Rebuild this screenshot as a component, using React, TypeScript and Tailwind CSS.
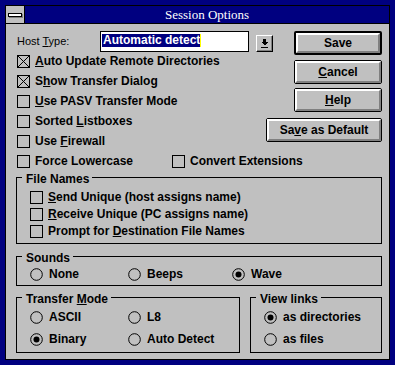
import React from "react";

const Check: React.FC<{ checked?: boolean }> = ({ checked }) => (
  <svg width="13" height="13" className="shrink-0" shapeRendering="crispEdges">
    <rect x="0.5" y="0.5" width="12" height="12" fill="none" stroke="black" />
    {checked && <path d="M1 1L12 12M12 1L1 12" stroke="black" />}
  </svg>
);

const Radio: React.FC<{ on?: boolean }> = ({ on }) => (
  <svg width="13" height="13" className="shrink-0">
    <circle cx="6.5" cy="6.5" r="5.8" fill="none" stroke="black" />
    {on && <circle cx="6.5" cy="6.5" r="3" fill="black" />}
  </svg>
);

const CheckRow: React.FC<{ checked?: boolean; h: string; children: React.ReactNode }> = ({ checked, h, children }) => (
  <div className={`flex items-start gap-[5px] whitespace-nowrap ${h}`}>
    <Check checked={checked} />
    <span className="leading-[13px]">{children}</span>
  </div>
);

const RadioItem: React.FC<{ on?: boolean; w?: string; children: React.ReactNode }> = ({ on, w = "", children }) => (
  <div className={`flex items-start gap-[6px] whitespace-nowrap ${w}`}>
    <Radio on={on} />
    <span className="leading-[13px]">{children}</span>
  </div>
);

const Btn: React.FC<{ def?: boolean; w: string; children: React.ReactNode }> = ({ def, w, children }) => (
  <div className={`flex h-[24px] rounded-[2px] border-black ${def ? "border-2" : "border"} ${w}`}>
    <div className="flex flex-1 items-center justify-center border-2 border-t-white border-l-white border-r-[#808080] border-b-[#808080] leading-none">
      {children}
    </div>
  </div>
);

const GroupLabel: React.FC<{ children: React.ReactNode }> = ({ children }) => (
  <span className="-mt-[5px] ml-[5px] self-start bg-[#c0c0c0] pl-[4px] pr-[3px] leading-[13px] whitespace-nowrap">
    {children}
  </span>
);

export default function App() {
  return (
    <div className="h-[365px] w-[395px] bg-[#000080] p-[5px] font-['Liberation_Sans',Arial,sans-serif] text-[12px] font-bold text-black">
      <div className="flex h-full flex-col border border-black bg-[#c0c0c0]">
        {/* title bar */}
        <div className="flex h-[18px] shrink-0 border-b border-black">
          <div className="flex w-[19px] items-center justify-center border-r border-black bg-[#c0c0c0]">
            <div className="h-[4px] w-[14px] border border-black bg-white shadow-[1px_1px_0_#808080]" />
          </div>
          <div className="flex flex-1 items-center justify-center bg-[#000080] font-['Liberation_Serif','Times_New_Roman',serif] text-[13px] font-normal text-white">
            Session Options
          </div>
        </div>

        <div className="flex flex-col pl-[10px] pr-[7px] pt-[7px]">
          <div className="flex pl-[1px]">
            <div className="flex min-w-0 flex-1 flex-col">
              <div className="flex h-[24px] items-start whitespace-nowrap">
                <span className="w-[83px] shrink-0 pt-[4px] text-[11px] font-normal leading-[13px]">
                  Host <u>T</u>ype:
                </span>
                <div className="flex h-[21px] w-[149px] shrink-0 items-start border border-black bg-white pl-[1px] pt-[2px]">
                  <span className="h-[13px] bg-[#000080] pl-[1px] leading-[13px] text-white">Automatic detect</span>
                  <span className="h-[13px] w-[1px] bg-[#ffff00]" />
                </div>
                <div className="ml-[7px] mt-[4px] flex h-[17px] w-[17px] shrink-0 items-center justify-center border border-t-white border-l-white border-r-black border-b-black bg-[#c0c0c0] shadow-[inset_-1px_-1px_0_#808080]">
                  <svg width="7" height="9" shapeRendering="crispEdges">
                    <rect x="2" y="0" width="3" height="3" fill="black" />
                    <path d="M0 3H7L3.5 6.5Z" fill="black" />
                    <rect x="0" y="8" width="7" height="1" fill="black" />
                  </svg>
                </div>
              </div>
              <CheckRow checked h="h-[20px]"><u>A</u>uto Update Remote Directories</CheckRow>
              <CheckRow checked h="h-[20px]">S<u>h</u>ow Transfer Dialog</CheckRow>
              <CheckRow h="h-[20px]"><u>U</u>se PASV Transfer Mode</CheckRow>
              <CheckRow h="h-[20px]">Sorted <u>L</u>istboxes</CheckRow>
              <CheckRow h="h-[20px]">Use <u>F</u>irewall</CheckRow>
              <div className="flex h-[20px] items-start">
                <div className="w-[155px] shrink-0">
                  <CheckRow h="h-[20px]">Force Lowercase</CheckRow>
                </div>
                <CheckRow h="h-[20px]">Convert Extensions</CheckRow>
              </div>
            </div>

            <div className="flex w-[116px] shrink-0 flex-col items-end">
              <Btn def w="w-[88px]">Save</Btn>
              <div className="mt-[5px]">
                <Btn w="w-[88px]"><u>C</u>ancel</Btn>
              </div>
              <div className="mt-[4px]">
                <Btn w="w-[88px]"><u>H</u>elp</Btn>
              </div>
              <div className="mt-[6px]">
                <Btn w="w-[116px]">Sa<u>v</u>e as Default</Btn>
              </div>
            </div>
          </div>

          {/* File Names */}
          <div className="mt-[2px] flex h-[67px] flex-col border border-black">
            <GroupLabel>File Names</GroupLabel>
            <div className="ml-[13px] mt-[5px] flex flex-col">
              <CheckRow h="h-[17px]"><u>S</u>end Unique (host assigns name)</CheckRow>
              <CheckRow h="h-[17px]"><u>R</u>eceive Unique (PC assigns name)</CheckRow>
              <CheckRow h="h-[17px]">Prompt for <u>D</u>estination File Names</CheckRow>
            </div>
          </div>

          {/* Sounds */}
          <div className="mt-[12px] flex h-[30px] flex-col border border-black">
            <GroupLabel>Sounds</GroupLabel>
            <div className="ml-[13px] mt-[3px] flex">
              <RadioItem w="w-[98px]">None</RadioItem>
              <RadioItem w="w-[104px]">Beeps</RadioItem>
              <RadioItem on>Wave</RadioItem>
            </div>
          </div>

          <div className="mt-[11px] flex">
            <div className="flex h-[56px] w-[224px] flex-col border border-black">
              <GroupLabel>Transfer <u>M</u>ode</GroupLabel>
              <div className="ml-[13px] mt-[5px] flex flex-col">
                <div className="flex h-[22px]">
                  <RadioItem w="w-[98px]">ASCII</RadioItem>
                  <RadioItem>L8</RadioItem>
                </div>
                <div className="flex h-[22px]">
                  <RadioItem on w="w-[98px]">Binary</RadioItem>
                  <RadioItem>Auto Detect</RadioItem>
                </div>
              </div>
            </div>
            <div className="ml-[10px] flex h-[56px] flex-1 flex-col border border-black">
              <GroupLabel>View links</GroupLabel>
              <div className="ml-[13px] mt-[5px] flex flex-col">
                <div className="flex h-[22px]">
                  <RadioItem on>as directories</RadioItem>
                </div>
                <div className="flex h-[22px]">
                  <RadioItem>as files</RadioItem>
                </div>
              </div>
            </div>
          </div>
        </div>
      </div>
    </div>
  );
}
